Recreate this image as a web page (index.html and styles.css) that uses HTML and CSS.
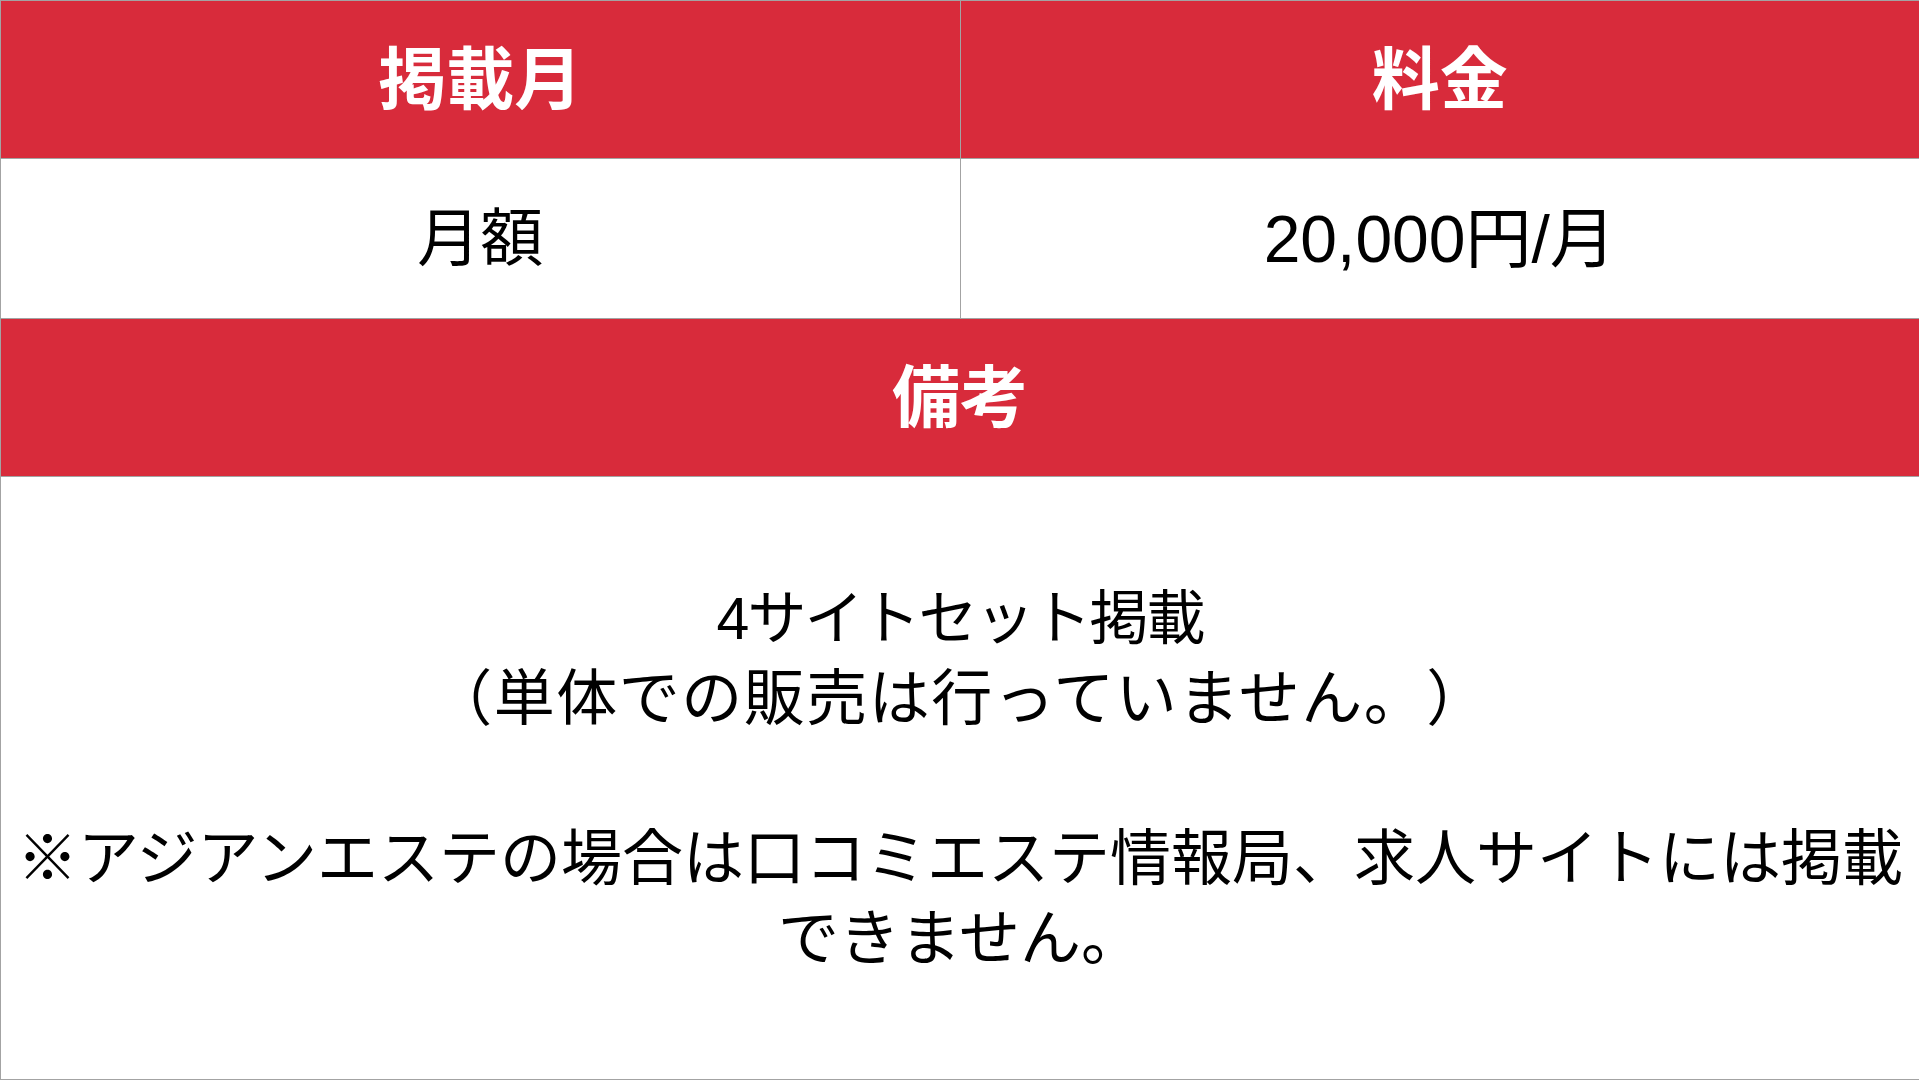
FILE: index.html
```html
<!DOCTYPE html>
<html lang="ja">
<head>
<meta charset="utf-8">
<title>掲載料金</title>
<link rel="stylesheet" href="styles.css">
</head>
<body>
<table class="price-table">
  <tr class="row-head">
    <th class="cell-head">掲載月</th>
    <th class="cell-head">料金</th>
  </tr>
  <tr class="row-body">
    <td class="cell-body">月額</td>
    <td class="cell-body cell-price">20,000円/月</td>
  </tr>
  <tr class="row-head">
    <th class="cell-head" colspan="2">備考</th>
  </tr>
  <tr class="row-note">
    <td class="cell-note" colspan="2"><span class="note-first">4サイトセット掲載</span><br><span class="note-second">（単体での販売は行っていません。）</span><br><br>※アジアンエステの場合は口コミエステ情報局、求人サイトには掲載<br>できません。</td>
  </tr>
</table>
</body>
</html>
```

FILE: styles.css
```css
html, body {
  margin: 0;
  padding: 0;
  background: #ffffff;
  overflow: hidden;
}

body {
  width: 1919px;
  height: 1080px;
  font-family: "Liberation Sans", "Noto Sans CJK JP", sans-serif;
  color: #000000;
  text-spacing-trim: space-all;
}

.price-table {
  width: 1920px;
  height: 1080px;
  border-collapse: collapse;
  table-layout: fixed;
}

.price-table th,
.price-table td {
  border: 1px solid #a3a3a3;
  text-align: center;
  vertical-align: middle;
  padding: 0;
}

.row-head {
  height: 158px;
}

.row-body {
  height: 160px;
}

.cell-head {
  background: #d82b3b;
  color: #ffffff;
  font-weight: bold;
  font-size: 68px;
  line-height: 1;
}

.cell-body {
  font-size: 63px;
  line-height: 1;
}

.cell-price {
  font-size: 66px;
}

.cell-note {
  font-size: 61px;
  line-height: 80px;
  white-space: nowrap;
}

.note-first {
  font-size: 59px;
  letter-spacing: -2px;
}

.note-second {
  letter-spacing: 1.5px;
}
```
